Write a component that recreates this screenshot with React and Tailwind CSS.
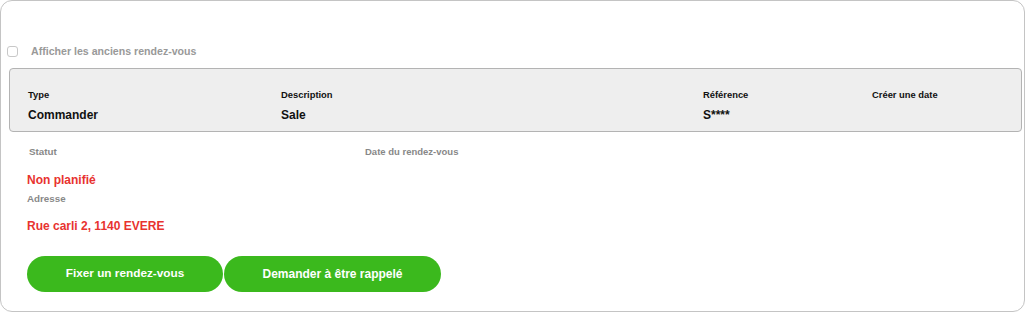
export default function App() {
  return (
    <div className="w-[1026px] h-[313px] bg-white">
      <div className="w-[1025px] h-[312px] border border-[#c4c4c4] rounded-[12px] bg-white font-['Liberation_Sans',Arial,sans-serif] flex flex-col">
        <div className="mt-[44px] h-[12px] flex items-center pl-[6px]">
          <div className="w-[11px] h-[11px] border border-[#c8c8c8] rounded-[3px] bg-white" />
          <span className="ml-[13px] text-[10.6px] leading-[12px] font-bold text-[#999999]">Afficher les anciens rendez-vous</span>
        </div>
        <div className="mt-[11px] ml-[8px] w-[1013px] h-[64px] border border-[#b3b3b3] rounded-[4px] bg-[#eeeeee] flex pl-[18px] pt-[20px]">
          <div className="w-[253px] flex flex-col">
            <span className="text-[9.4px] leading-[12px] font-bold text-[#111]">Type</span>
            <span className="mt-[7px] text-[12px] leading-[14px] font-bold text-[#111]">Commander</span>
          </div>
          <div className="w-[422px] flex flex-col">
            <span className="text-[9.4px] leading-[12px] font-bold text-[#111]">Description</span>
            <span className="mt-[7px] text-[12px] leading-[14px] font-bold text-[#111]">Sale</span>
          </div>
          <div className="w-[169px] flex flex-col">
            <span className="text-[9.4px] leading-[12px] font-bold text-[#111]">Référence</span>
            <span className="mt-[7px] text-[12px] leading-[14px] font-bold text-[#111]">S****</span>
          </div>
          <div className="flex flex-col">
            <span className="text-[9.4px] leading-[12px] font-bold text-[#111]">Créer une date</span>
          </div>
        </div>
        <div className="mt-[14px] ml-[26px] flex">
          <div className="w-[338px] flex flex-col">
            <span className="ml-[2px] text-[9.8px] leading-[12px] font-bold text-[#888888]">Statut</span>
            <span className="mt-[15px] text-[12px] leading-[14px] font-bold text-[#e8332f]">Non planifié</span>
            <span className="mt-[6px] text-[9.8px] leading-[12px] font-bold text-[#888888]">Adresse</span>
            <span className="mt-[14px] text-[12px] leading-[14px] font-bold text-[#e8332f]">Rue carli 2, 1140 EVERE</span>
          </div>
          <div className="flex flex-col">
            <span className="text-[9.5px] leading-[12px] font-bold text-[#888888]">Date du rendez-vous</span>
          </div>
        </div>
        <div className="mt-[23px] ml-[26px] flex gap-[1px]">
          <button className="w-[196px] h-[36px] rounded-full bg-[#3bb91d] text-white text-[11.8px] font-bold">Fixer un rendez-vous</button>
          <button className="w-[217px] h-[36px] rounded-full bg-[#3bb91d] text-white text-[12px] font-bold">Demander à être rappelé</button>
        </div>
      </div>
    </div>
  );
}
